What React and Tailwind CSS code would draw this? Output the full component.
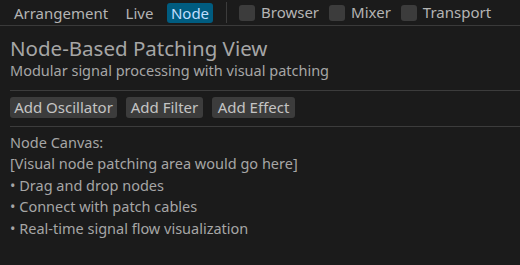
import React, { useState } from "react";

const tabs = [
  { label: "Arrangement", w: "w-[102px]" },
  { label: "Live", w: "w-[37px]" },
  { label: "Node", w: "w-[46px]" }
];

const toggles = ["Browser", "Mixer", "Transport"];

const buttons = [
  { label: "Add Oscillator", w: "w-[107px]" },
  { label: "Add Filter", w: "w-[77px]" },
  { label: "Add Effect", w: "w-[83px]" }
];

const notes = [
  "Node Canvas:",
  "[Visual node patching area would go here]",
  "• Drag and drop nodes",
  "• Connect with patch cables",
  "• Real-time signal flow visualization"
];

const App = () => {
  const [active, setActive] = useState("Node");
  const [checked, setChecked] = useState({});

  return (
    <div
      className="w-[520px] h-[265px] overflow-hidden bg-[#1b1b1b] text-[14.5px] text-[#a6a6a6]"
      style={{ fontFamily: '"Noto Sans", "Open Sans", sans-serif' }}
    >
      {/* Top bar */}
      <div className="h-[26px] border-b border-[#3a3a3a] flex items-center pl-[10px] text-[15px]">
        {tabs.map(t =>
          <button
            key={t.label}
            onClick={() => setActive(t.label)}
            className={`${t.w} h-[20px] mr-[9px] rounded-[3px] leading-[20px] text-center ${active ===
            t.label
              ? "bg-[#005c80] text-[#c0deff]"
              : "text-[#b4b4b4]"}`}
          >
            {t.label}
          </button>
        )}
        <div className="w-px h-[21px] bg-[#3c3c3c] ml-[4px] mr-[12px]" />
        {toggles.map(name =>
          <label
            key={name}
            className="flex items-center mr-[10px] text-[#b4b4b4] cursor-pointer"
          >
            <span
              onClick={() => setChecked(c => ({ ...c, [name]: !c[name] }))}
              className="w-[16px] h-[16px] rounded-[3px] bg-[#3c3c3c] mr-[6px]"
            />
            {name}
          </label>
        )}
      </div>

      {/* Main panel */}
      <div className="pl-[10px] pt-[9px]">
        <div className="h-[26px] leading-[26px] text-[20.5px]">
          Node-Based Patching View
        </div>
        <div className="h-[18px] leading-[18px]">
          Modular signal processing with visual patching
        </div>
        <div className="h-px bg-[#3c3c3c] mt-[11px]" />
        <div className="flex gap-[9px] mt-[6px] text-[15px]">
          {buttons.map(b =>
            <button
              key={b.label}
              className={`${b.w} h-[21px] leading-[21px] rounded-[3px] bg-[#3c3c3c] text-[#c4c4c4] text-center`}
            >
              {b.label}
            </button>
          )}
        </div>
        <div className="h-px bg-[#3c3c3c] mt-[8px]" />
        <div className="mt-[5px]">
          {notes.map(n =>
            <div key={n} className="h-[21.4px] leading-[21.4px]">
              {n}
            </div>
          )}
        </div>
      </div>
    </div>
  );
};

export default App;
